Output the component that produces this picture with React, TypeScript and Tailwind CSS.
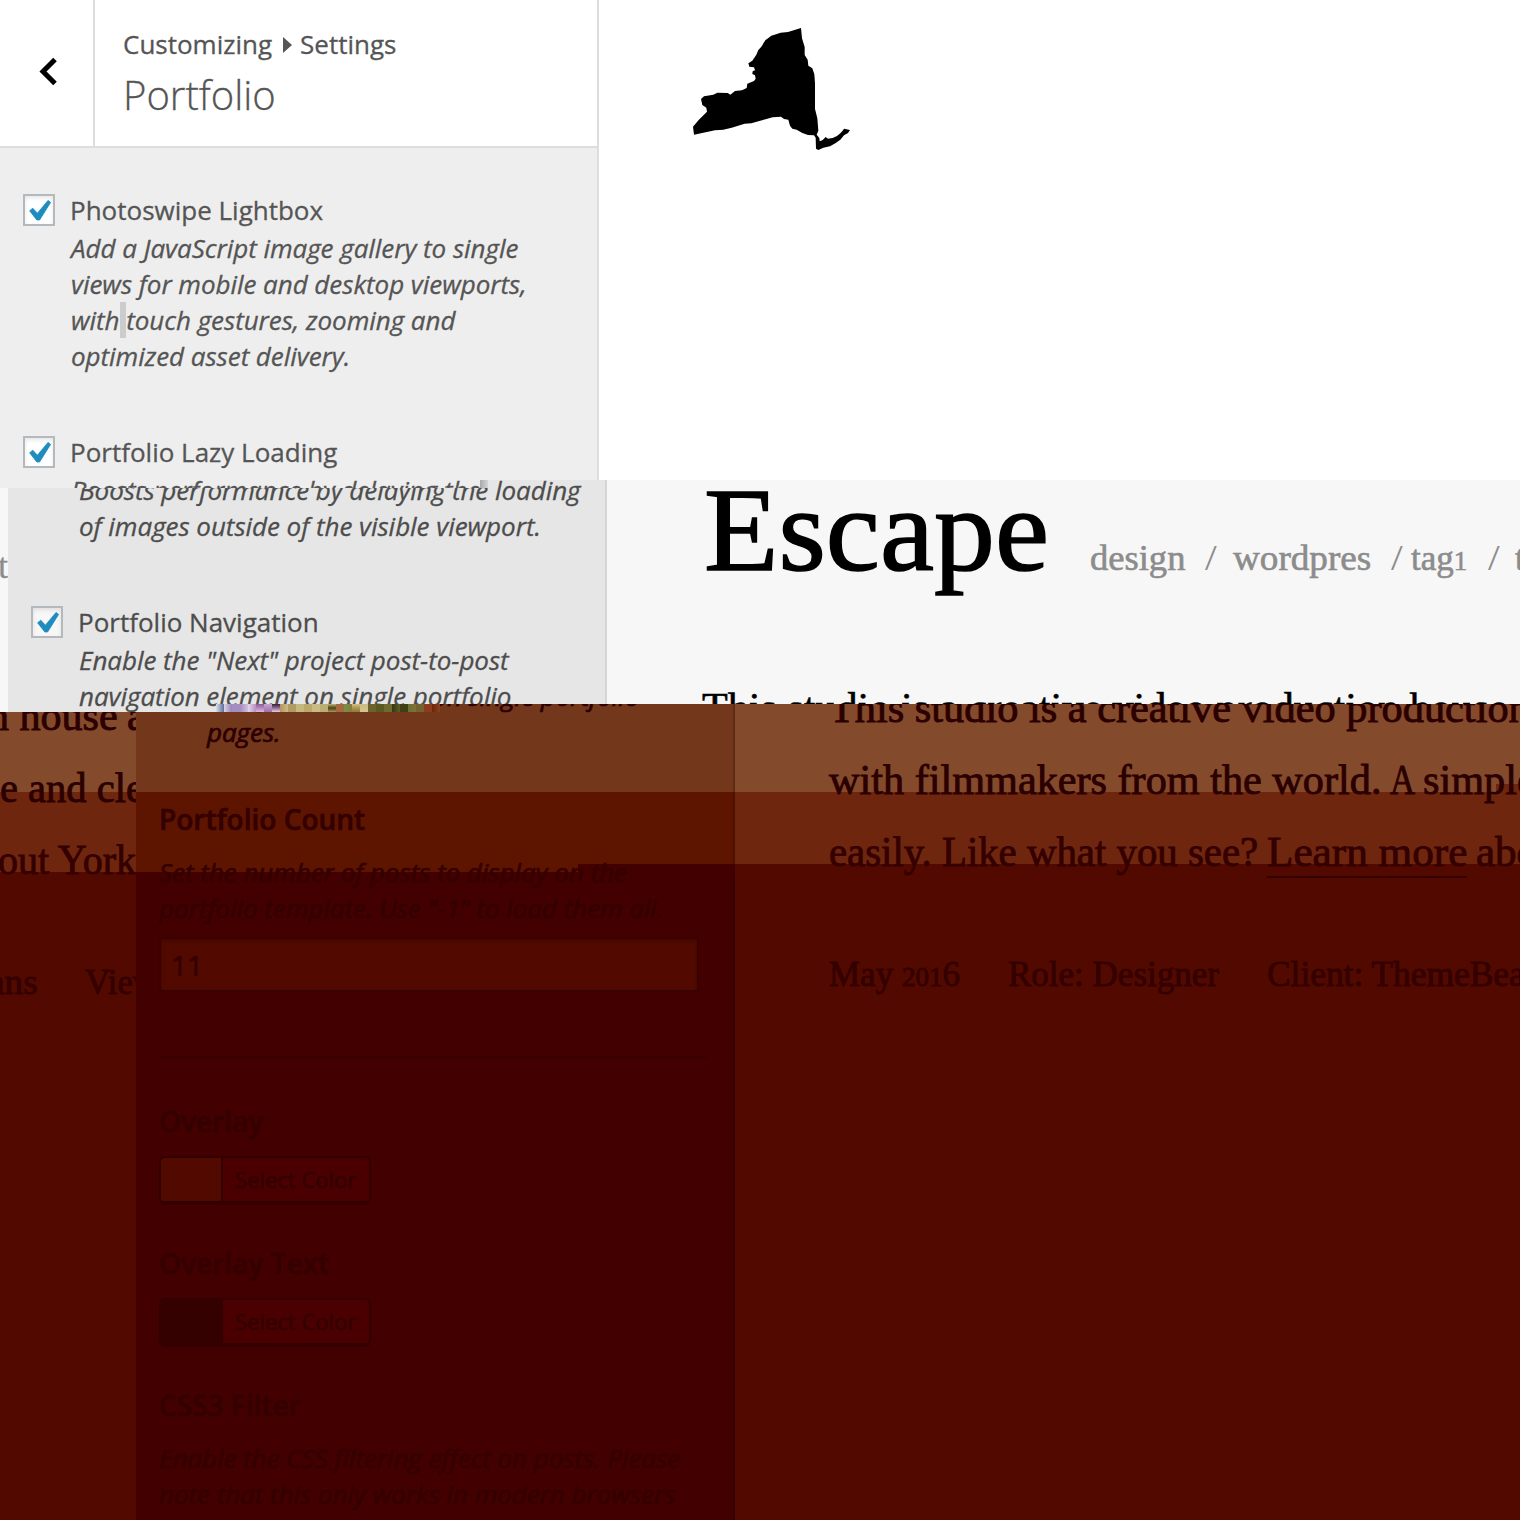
import { useLayoutEffect, useRef, useState, type ReactNode } from "react";

const SERIF = "font-['Liberation_Serif',serif]";

/** Text stretched horizontally so that it fills the width of its own box. */
function Fit({ className, children }: { className: string; children: ReactNode }) {
  const box = useRef<HTMLSpanElement>(null);
  const text = useRef<HTMLSpanElement>(null);
  const [scale, setScale] = useState(1);
  useLayoutEffect(() => {
    if (box.current && text.current) setScale(box.current.clientWidth / text.current.offsetWidth);
  }, []);
  return (
    <span ref={box} className={`block shrink-0 whitespace-nowrap ${className}`}>
      <span ref={text} className="inline-block origin-left" style={{ transform: `scaleX(${scale})` }}>
        {children}
      </span>
    </span>
  );
}

function Checkbox({ dim = false }: { dim?: boolean }) {
  return (
    <span
      className={`mt-[2px] block size-8 shrink-0 border-2 border-[#b4b9be] shadow-[inset_0_2px_4px_rgba(0,0,0,0.1)] ${dim ? "bg-[#f7f7f7]" : "bg-white"}`}
    >
      <svg viewBox="0 0 28 28" className="size-7">
        <path d="M4.6 14.8l3.2-2.6 4.6 5L23 4.4l2.6 2L14.6 24h-2.8z" fill="#1e8cbe" stroke="#1e8cbe" strokeWidth="0.8" strokeLinejoin="round" />
      </svg>
    </span>
  );
}

function Option({ label, dim, children }: { label: string; dim?: boolean; children?: ReactNode }) {
  return (
    <div className="flex gap-[15px] pl-[23px]">
      <Checkbox dim={dim} />
      <div>
        <div className="h-[38px] whitespace-nowrap">{label}</div>
        {children && <div className="pl-px tracking-[-0.05px] italic whitespace-nowrap">{children}</div>}
      </div>
    </div>
  );
}

function ColorButton({ swatch }: { swatch: string }) {
  return (
    <div className="flex h-[49px] w-[212px] overflow-hidden rounded-[6px] border-2 border-b-4 border-[#330000] bg-[#4a0000]">
      <span className={`w-[62px] border-r-2 border-[#330000] ${swatch}`} />
      <span className="pl-3 text-[22px] leading-[43px]">Select Color</span>
    </div>
  );
}

function StateLogo() {
  return (
    <svg viewBox="0 0 570 450" className="mt-[15px] ml-[81px] h-[150px] w-[190px]">
      <path
        d="M363 39L366 70L374 96L374 120L383 134L385 152L397 160L403 178L405 205L405 282L412 310L415 347L410 359L418 369L419 379L428 375L437 366L444 371L458 369L471 363L481 355L488 347L492 341L510 345L504 354L492 361L481 374L466 385L450 394L430 398L415 405L408 401L407 368L402 361L384 360L367 354L350 344L337 341L330 332L325 314L312 312L303 305L278 307L238 318L214 325L194 326L155 338L130 344L105 346L42 359L39 335L56 315L81 290L79 278L67 270L63 252L72 244L100 239L112 233L143 234L151 239L165 228L186 226L200 219L202 206L222 198L227 191L225 181L217 177L218 169L225 166L222 157L208 155L205 145L217 137L229 119L235 105L244 95L256 76L274 62L302 53L324 51Z"
        fill="#000"
      />
    </svg>
  );
}

/** Upper part of the customizer: header and first options. */
function HeaderBand() {
  return (
    <section className="flex h-[480px] overflow-hidden">
      <aside className="h-full w-[599px] shrink-0 border-r-2 border-[#ddd] bg-[#eee]">
        <header className="flex h-[148px] border-b-2 border-[#ddd] bg-white">
          <div className="flex w-[95px] items-center justify-center border-r-2 border-[#ddd]">
            <svg viewBox="0 0 20 30" className="mt-[-2px] h-[30px] w-5">
              <path d="M18 2.5L6 14.5l12 12" fill="none" stroke="#000" strokeWidth="5" />
            </svg>
          </div>
          <div className="pt-[26px] pl-7">
            <div className="flex items-center leading-[36px]">
              Customizing
              <svg viewBox="0 0 9 16" className="mr-[8px] ml-[11px] mt-0.5 h-4 w-[9px]">
                <path d="M0 0l9 8-9 8z" fill="#555" />
              </svg>
              Settings
            </div>
            <Fit className="mt-[6px] w-[153px] text-[40px] leading-[54px] font-light">Portfolio</Fit>
          </div>
        </header>
        <div className="flex flex-col gap-[60px] pt-[44px]">
          <Option label="Photoswipe Lightbox">
            Add a JavaScript image gallery to single
            <br />
            views for mobile and desktop viewports,
            <br />
            with<span className="bg-[#ccc]"> </span>touch gestures, zooming and
            <br />
            optimized asset delivery.
          </Option>
          <Option label="Portfolio Lazy Loading" />
        </div>
      </aside>
      <main className="flex-1 bg-white">
        <StateLogo />
      </main>
    </section>
  );
}

/** Middle part, displaced by eight pixels. */
function MiddleBand() {
  return (
    <section className="relative flex h-[224px] overflow-hidden bg-[#f7f7f7]">
      <div className={`w-2 shrink-0 overflow-hidden pt-[66px] text-[36px] leading-[40px] text-[#8c8c8c] ${SERIF}`}>
        <span className="-ml-0.5">t</span>
      </div>
      <aside className="w-[599px] shrink-0 border-r-2 border-[#d5d5d5] bg-[#e6e6e6] text-[#4d4d4d]">
        <div className="mt-[-8px] mb-[60px] pl-[71px] tracking-[-0.05px] whitespace-nowrap italic">
          Boosts performance by delaying the loading
          <br />
          of images outside of the visible viewport.
        </div>
        <Option label="Portfolio Navigation" dim>
          Enable the "Next" project post-to-post
          <br />
          navigation element on single portfolio
        </Option>
      </aside>
      <main className={`w-[913px] shrink-0 overflow-hidden text-black ${SERIF}`}>
        <div className="flex h-[146px] items-baseline pl-[97px] text-[35px] text-[#8c8c8c] [-webkit-text-stroke:0.6px]">
          <Fit className="mt-[-22px] w-[345px] text-[119px] leading-[144px] text-black [-webkit-text-stroke:1.5px]">Escape</Fit>
          <Fit className="ml-[41px] w-[95px]">design</Fit>
          <Fit className="ml-[20px] w-[12px] [-webkit-text-stroke:0px]">/</Fit>
          <Fit className="ml-[16px] w-[138px]">wordpres</Fit>
          <Fit className="ml-[20px] w-[12px] [-webkit-text-stroke:0px]">/</Fit>
          <Fit className="ml-[8px] w-[56px]">
            tag<span className="text-[27px]">1</span>
          </Fit>
          <Fit className="ml-[21px] w-[12px] [-webkit-text-stroke:0px]">/</Fit>
          <span className="ml-[15px]">t</span>
        </div>
        <div className="mt-[46px] flex pl-[95px] text-[43px] leading-[72px] [-webkit-text-stroke:0.6px]">
          <Fit className="w-[806px]">This studio is a creative video production house</Fit>
        </div>
      </main>
      <div className="absolute top-0 left-0 h-2 w-[488px] overflow-hidden bg-[#eee]">
        <div className="mt-[-8px] pl-[71px] tracking-[-0.05px] whitespace-nowrap italic">Boosts performance by delaying the</div>
        <span className="absolute top-0 right-0 h-2 w-2 bg-linear-to-r from-[#aaa] to-[#d5d5d5]" />
      </div>
    </section>
  );
}

/** Cells of the garbled strip, eight pixels each. */
const ARTIFACTS = [
  "bg-linear-to-r from-[#dcdfe6] to-[#5d6f9c]",
  "bg-linear-to-r from-[#d9d6e6] to-[#9a83b4]",
  "bg-[#a48dc0]",
  "bg-linear-to-r from-[#a48dc0] to-[#d0c0de]",
  "bg-linear-to-r from-[#e2d8ea] to-[#b78fc2]",
  "bg-linear-to-b from-[#8c5b95] to-[#e0b9df]",
  "bg-linear-to-b from-[#c6a3cf] to-[#a070aa]",
  "bg-linear-to-b from-[#3c1d40] to-[#e7cfe6]",
  "bg-linear-to-r from-[#b89360] to-[#cbbb86]",
  "bg-[#b09c62]",
  "bg-[#c6b77e]",
  "bg-[#baa96b]",
  "bg-[#c9bb83]",
  "bg-[#bcad72]",
  "bg-linear-to-b from-[#c0b47c] via-[#4f431a] to-[#a89a5c]",
  "bg-[#a56940]",
  "bg-linear-to-r from-[#729348] to-[#8a7a3c]",
  "bg-linear-to-b from-[#d0c185] via-[#b0964e] to-[#8a7a3c]",
  "bg-linear-to-b from-[#c9bb83] to-[#d3c68c]",
  "bg-[#6b622c]",
  "bg-[#5c5822]",
  "bg-[#716a30]",
  "bg-linear-to-r from-[#333712] to-[#5d5f28]",
  "bg-[#3f3f17]",
  "bg-linear-to-r from-[#6a7130] to-[#807238]",
  "bg-[#746331]",
  "bg-[#8b3c1d]",
  "bg-linear-to-r from-[#6d2309] to-[#8a421c]",
];

/** Lower part, tinted dark red and displaced further to the right. */
function TintedBand() {
  return (
    <section className="relative flex h-[816px] overflow-hidden text-[#340000]">
      <div
        className={`w-[136px] shrink-0 overflow-hidden bg-[linear-gradient(#844a2c_88px,#6f260f_88px,#6f260f_168px,#520a00_168px)] text-[43px] leading-[72px] [-webkit-text-stroke:0.9px] ${SERIF}`}
      >
        <div className="mt-[-24px] flex text-[#2b0000]">
          <Fit className="-ml-3 w-[130px]">n house</Fit>
          <span className="ml-[9px]">a</span>
        </div>
        <div className="flex text-[#2b0000]">
          <Fit className="w-[162px]">e and clea</Fit>
        </div>
        <div className="flex">
          <Fit className="-ml-[2px] w-[138px]">out York</Fit>
        </div>
        <div className="mt-[67px] flex text-[35px] leading-[40px]">
          <Fit className="-ml-[12px] w-[50px]">ans</Fit>
          <Fit className="ml-[47px] w-[73px]">View</Fit>
        </div>
      </div>
      <aside className="relative w-[599px] shrink-0 border-r-2 border-[#00000030] bg-[linear-gradient(#73371b_88px,#5e1500_88px,#5e1500_168px,#430000_168px)] bg-clip-border">
        <div className="absolute top-[160px] right-[-2px] h-2 w-[157px] bg-[#430000]" />
        <div className="relative h-full pl-[23px] [-webkit-text-stroke:0.7px]">
          <div className="mt-[-26px] pl-[48px] tracking-[-0.05px] whitespace-nowrap text-[#2b0000] italic">
            navigation element on single portfolio
            <br />
            pages.
          </div>
          <h3 className="mt-[51px] text-[28px] font-semibold">
            <Fit className="w-[206px]">Portfolio Count</Fit>
          </h3>
          <div className="mt-[17px] tracking-[-0.05px] whitespace-nowrap italic">
            Set the number of posts to display on the
            <br />
            portfolio template. Use "-1" to load them all.
          </div>
          <div className="mt-[11px] h-[55px] w-[540px] border-2 border-[#3b0000] bg-[#520a00] pl-[10px] text-[28px] leading-[52px] shadow-[inset_0_2px_4px_rgba(40,0,0,0.4)]">
            11
          </div>
          <div className="mt-[64px] w-[547px] border-t-2 border-[#370000]" />
          <h3 className="mt-[45px] mb-[17px] text-[28px] font-semibold">Overlay</h3>
          <ColorButton swatch="bg-[#520a00]" />
          <h3 className="mt-10 mb-[17px] text-[28px] font-semibold">Overlay Text</h3>
          <ColorButton swatch="bg-[#350000]" />
          <h3 className="mt-10 mb-[17px] text-[28px] font-semibold">CSS3 Filter</h3>
          <div className="tracking-[-0.05px] whitespace-nowrap italic">
            Enable the CSS filtering effect on posts. Please
            <br />
            note that this only works in modern browsers
          </div>
        </div>
      </aside>
      <main
        className={`relative w-[785px] shrink-0 overflow-hidden bg-[linear-gradient(#844a2c_88px,#6f260f_88px,#6f260f_160px,#520a00_160px)] pl-[94px] text-[43px] leading-[72px] [-webkit-text-stroke:0.9px] ${SERIF}`}
      >
        <div className="absolute top-20 right-0 h-2 w-6 bg-[#6f260f]" />
        <div className="relative mt-[-32px] flex text-[#2b0000]">
          <Fit className="w-[701px]">This studio is a creative video production</Fit>
        </div>
        <div className="relative flex text-[#2b0000]">
          <Fit className="w-[552px]">with filmmakers from the world.</Fit>
          <Fit className="ml-[9px] w-[25px]">A</Fit>
          <Fit className="ml-[8px] w-[113px]">simple</Fit>
        </div>
        <div className="flex">
          <Fit className="w-[429px]">easily. Like what you see?</Fit>
          <Fit className="ml-[9px] h-[62px] w-[200px] border-b-2 border-[#340000]">Learn more</Fit>
          <Fit className="ml-[9px] w-[96px]">about</Fit>
        </div>
        <div className="mt-[67px] flex text-[35px] leading-[40px]">
          <Fit className="w-[131px]">
            May <span className="text-[27px]">201</span>6
          </Fit>
          <Fit className="ml-[48px] w-[211px]">Role: Designer</Fit>
          <Fit className="ml-[48px] w-[289px]">Client: ThemeBeans</Fit>
        </div>
      </main>
      <div className="absolute top-0 left-0 flex h-2 w-[440px] overflow-hidden">
        <div className="relative flex w-[216px] shrink-0 overflow-hidden bg-[#e6e6e6] text-[#4d4d4d]">
          <span className="h-2 w-2 shrink-0 bg-[#f7f7f7]" />
          <span className="mt-[-26px] ml-[71px] tracking-[-0.05px] whitespace-nowrap italic [-webkit-text-stroke:0.3px]">navigation element</span>
        </div>
        {ARTIFACTS.map((c, i) => (
          <span key={i} className={`size-2 shrink-0 ${c}`} />
        ))}
      </div>
    </section>
  );
}

export default function App() {
  return (
    <div className="h-[1520px] w-[1520px] overflow-hidden bg-white font-['Open_Sans',sans-serif] text-[26px] leading-[36px] text-[#555] [-webkit-text-stroke:0.3px]">
      <HeaderBand />
      <MiddleBand />
      <TintedBand />
    </div>
  );
}
